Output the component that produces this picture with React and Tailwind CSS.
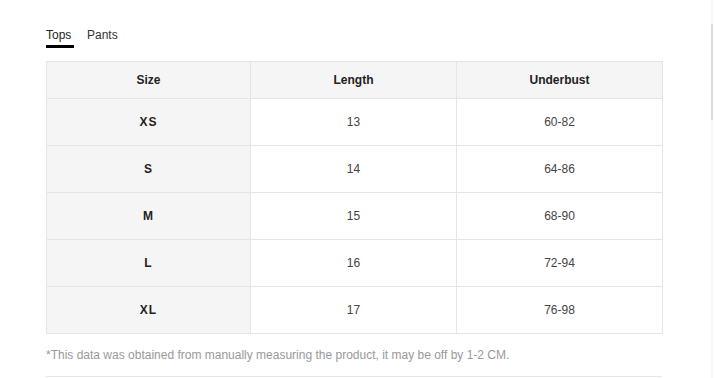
import React from "react";

const rows = [
  { size: "XS", length: "13", underbust: "60-82" },
  { size: "S", length: "14", underbust: "64-86" },
  { size: "M", length: "15", underbust: "68-90" },
  { size: "L", length: "16", underbust: "72-94" },
  { size: "XL", length: "17", underbust: "76-98" }
];

const App = () => {
  return (
    <div className="flex w-[714px] h-[378px] overflow-hidden bg-white font-['Liberation_Sans',Arial,sans-serif] text-[12px] text-[#333]">
      <div className="flex-1 pl-[46px] pr-[48px]">
        {/* Tabs */}
        <div className="flex gap-[13px] pt-[27px] h-[61px]">
          <div className="flex flex-col">
            <span className="leading-[16px] text-[#222]">Tops</span>
            <span className="mt-[2px] h-[3px] w-[28px] bg-black" />
          </div>
          <span className="leading-[16px] text-[#333]">Pants</span>
        </div>

        {/* Table */}
        <table className="w-[616px] border-collapse table-fixed">
          <colgroup>
            <col className="w-[204px]" />
            <col className="w-[206px]" />
            <col className="w-[206px]" />
          </colgroup>
          <thead>
            <tr className="h-[37px] bg-[#f5f5f5]">
              <th className="border border-[#e5e5e5] font-bold text-[#222]">Size</th>
              <th className="border border-[#e5e5e5] font-bold text-[#222]">Length</th>
              <th className="border border-[#e5e5e5] font-bold text-[#222]">Underbust</th>
            </tr>
          </thead>
          <tbody>
            {rows.map((r) => (
              <tr key={r.size} className="h-[47px]">
                <td className="border border-[#e5e5e5] bg-[#f5f5f5] text-center font-bold text-[#222] tracking-[1px]">
                  {r.size}
                </td>
                <td className="border border-[#e5e5e5] text-center text-[#444]">{r.length}</td>
                <td className="border border-[#e5e5e5] text-center text-[#444]">{r.underbust}</td>
              </tr>
            ))}
          </tbody>
        </table>

        {/* Footnote */}
        <p className="mt-[13px] leading-[16px] text-[#999]">
          *This data was obtained from manually measuring the product, it may be off by 1-2 CM.
        </p>
        <div className="mt-[13px] w-[616px] border-t border-[#e5e5e5]" />
      </div>

      {/* Scrollbar */}
      <div className="w-[4px] mr-[1px] bg-[#f7f7f7] pt-[24px]">
        <div className="h-[96px] bg-[#dcdcdc]" />
      </div>
    </div>
  );
};

export default App;
